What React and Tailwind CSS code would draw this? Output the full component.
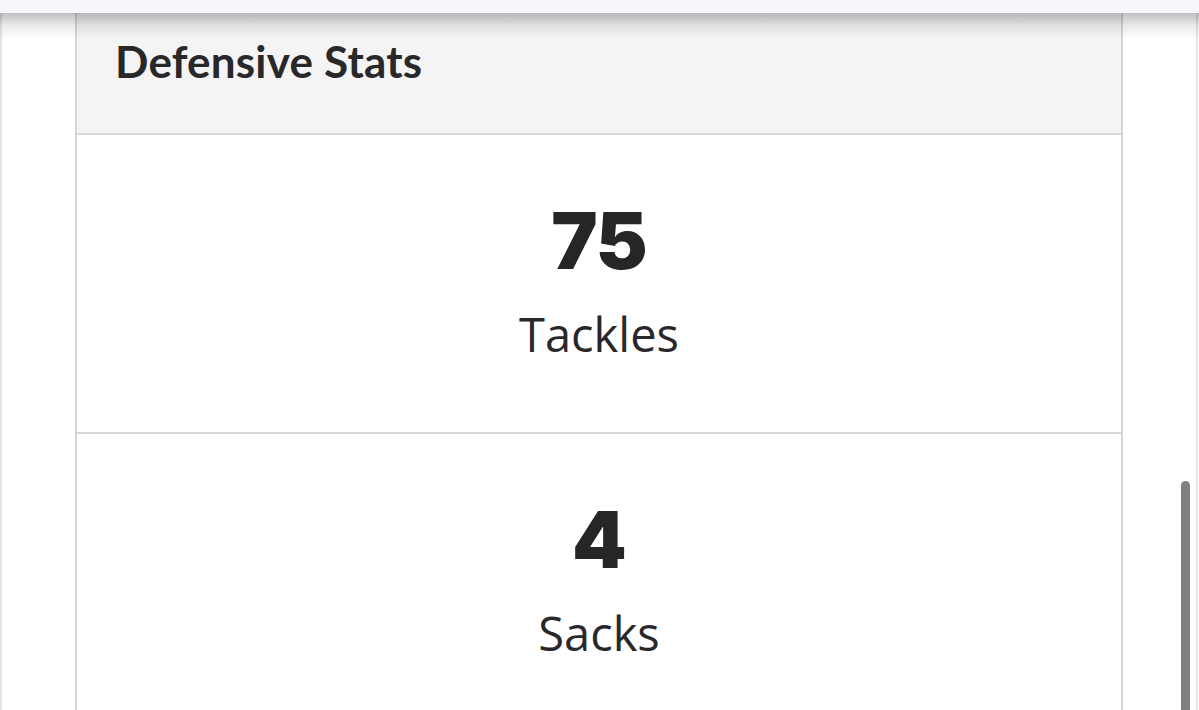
import React from 'react';

const stats = [
  { value: '75', label: 'Tackles' },
  { value: '4', label: 'Sacks' },
];

export default function App() {
  return (
    <div className="relative h-[710px] w-[1199px] overflow-hidden bg-white font-['Lato',sans-serif] text-[#28282b]">
      {/* top bar + its shadow */}
      <div className="h-[13px] bg-[#f6f7fb]" />
      <div className="pointer-events-none absolute left-0 right-0 top-[13px] z-10 h-[26px] bg-linear-to-b from-black/25 via-black/8 to-transparent" />

      <div className="flex h-[697px] w-[1199px]">
        <div className="flex w-[1198px] border-x-[2px] border-[#e4e4e4]">
          {/* card */}
          <div className="ml-[73px] w-[1048px] border-x-[2px] border-[#d6d6d6]">
            <div className="h-[122px] border-b-[2px] border-[#d6d6d6] bg-[#f4f4f4] pl-[38px] pt-[22px]">
              <h2 className="text-[44px] font-bold leading-[53px] tracking-[0.2px]">Defensive Stats</h2>
            </div>

            {stats.map((s) => (
              <div key={s.label} className="flex h-[299px] flex-col items-center border-b-[2px] border-[#d6d6d6] pt-[67px]">
                <div className="font-['Inter',sans-serif] text-[78px] font-black leading-none tracking-[-1px] text-[#262628]">{s.value}</div>
                <div className="mt-[31px] font-['Open_Sans',sans-serif] text-[47px] font-normal leading-none">{s.label}</div>
              </div>
            ))}
          </div>
        </div>
      </div>

      {/* scrollbar thumb */}
      <div className="absolute left-[1181px] top-[481px] h-[260px] w-[9px] rounded-full bg-[#808080]" />
    </div>
  );
}
